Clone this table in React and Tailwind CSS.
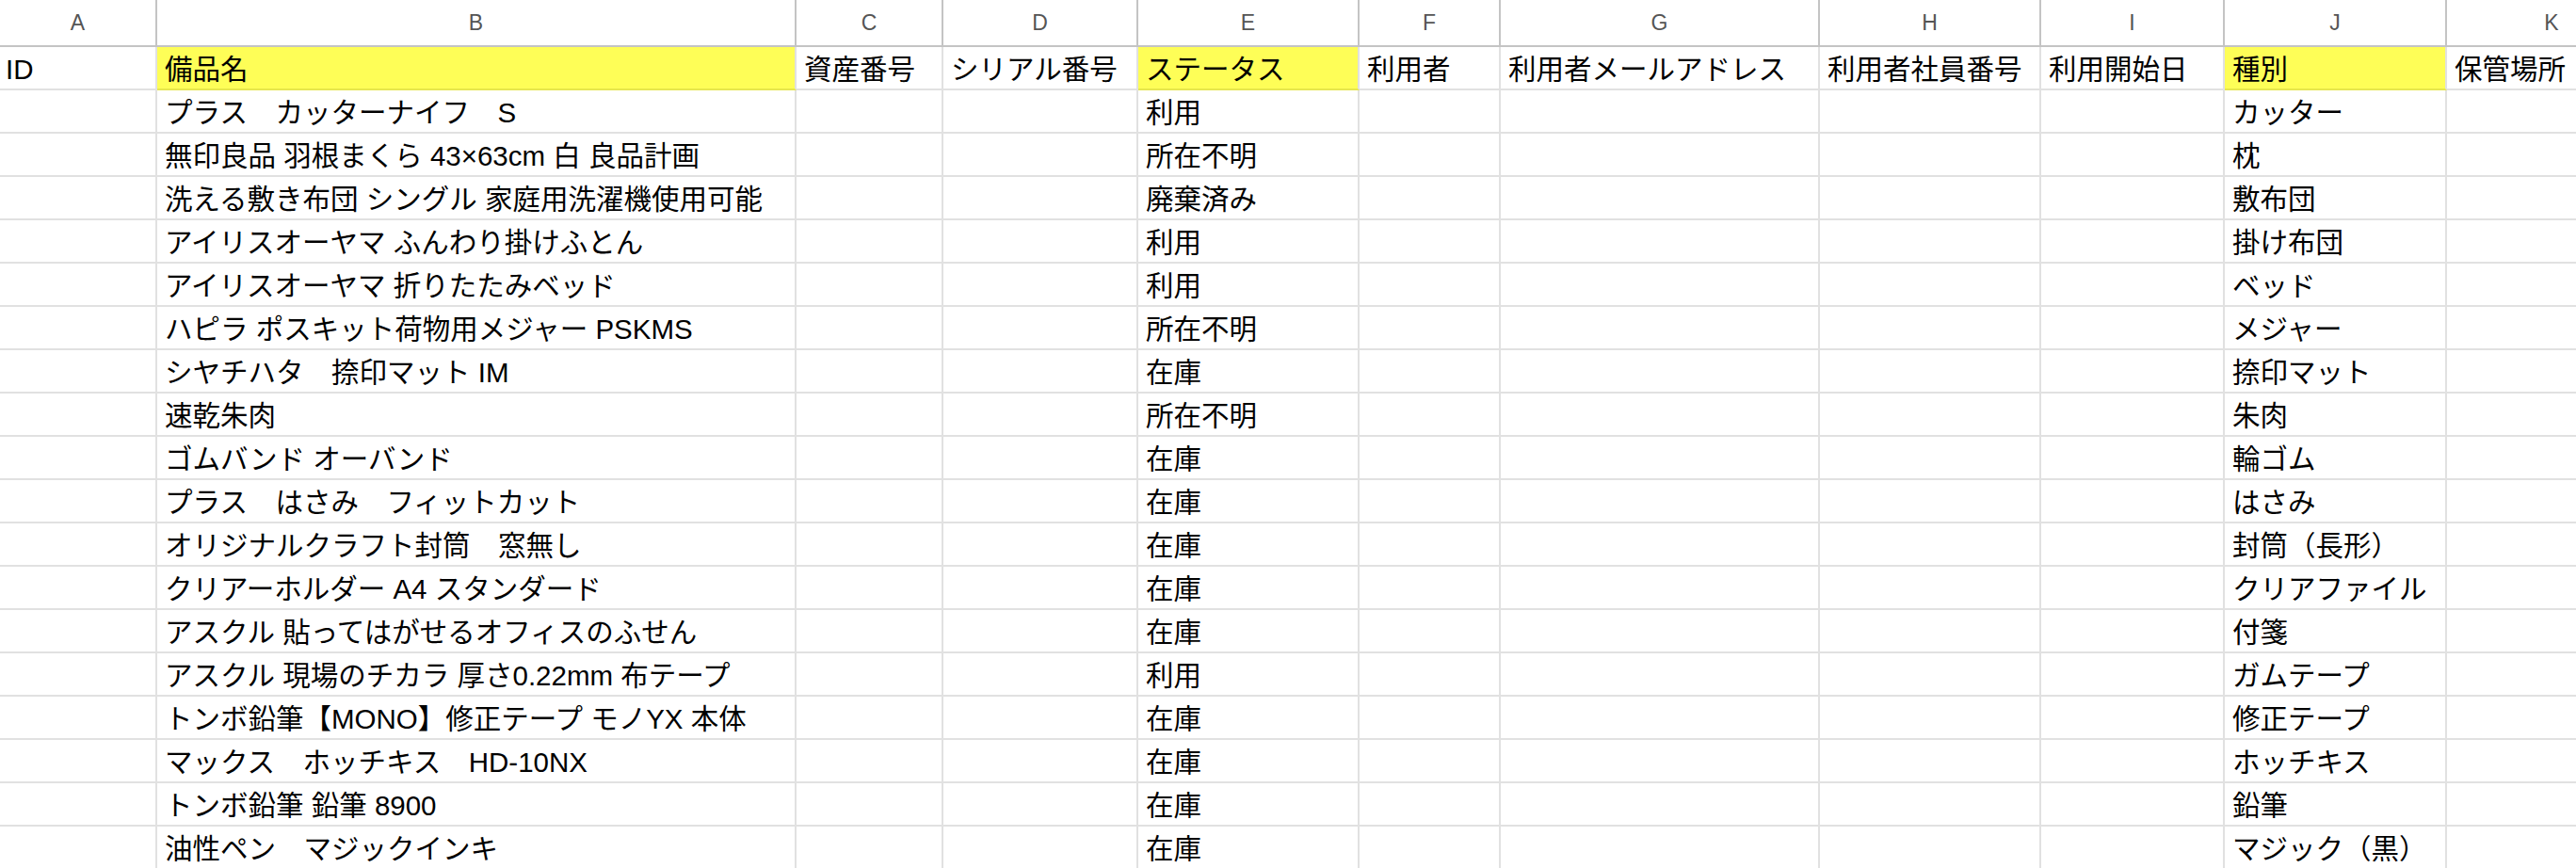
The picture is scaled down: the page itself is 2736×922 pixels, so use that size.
const cols = ["A", "B", "C", "D", "E", "F", "G", "H", "I", "J", "K"];

const header = [
  "ID",
  "備品名",
  "資産番号",
  "シリアル番号",
  "ステータス",
  "利用者",
  "利用者メールアドレス",
  "利用者社員番号",
  "利用開始日",
  "種別",
  "保管場所",
];

const yellowCols = [1, 4, 9];

const rows = [
  ["プラス　カッターナイフ　S", "利用", "カッター"],
  ["無印良品 羽根まくら 43×63cm 白 良品計画", "所在不明", "枕"],
  ["洗える敷き布団 シングル 家庭用洗濯機使用可能", "廃棄済み", "敷布団"],
  ["アイリスオーヤマ ふんわり掛けふとん", "利用", "掛け布団"],
  ["アイリスオーヤマ 折りたたみベッド", "利用", "ベッド"],
  ["ハピラ ポスキット荷物用メジャー PSKMS", "所在不明", "メジャー"],
  ["シヤチハタ　捺印マット IM", "在庫", "捺印マット"],
  ["速乾朱肉", "所在不明", "朱肉"],
  ["ゴムバンド オーバンド", "在庫", "輪ゴム"],
  ["プラス　はさみ　フィットカット", "在庫", "はさみ"],
  ["オリジナルクラフト封筒　窓無し", "在庫", "封筒（長形）"],
  ["クリアーホルダー A4 スタンダード", "在庫", "クリアファイル"],
  ["アスクル 貼ってはがせるオフィスのふせん", "在庫", "付箋"],
  ["アスクル 現場のチカラ 厚さ0.22mm 布テープ", "利用", "ガムテープ"],
  ["トンボ鉛筆【MONO】修正テープ モノYX 本体", "在庫", "修正テープ"],
  ["マックス　ホッチキス　HD-10NX", "在庫", "ホッチキス"],
  ["トンボ鉛筆 鉛筆 8900", "在庫", "鉛筆"],
  ["油性ペン　マジックインキ", "在庫", "マジック（黒）"],
];

function toCells(r) {
  const c = Array(11).fill("");
  c[1] = r[0];
  c[4] = r[1];
  c[9] = r[2];
  return c;
}

function Cell({ children, col, yellow }) {
  return (
    <div
      className={
        "flex items-center overflow-hidden whitespace-nowrap border-r-2 border-b-2 border-r-[#e1e1e1] pt-[4px] leading-[36px] " +
        (col === 0 ? "pl-[6px] " : "pl-[8px] ") +
        (yellow ? "bg-[#fefe57] border-b-[#e6e64e]" : "bg-white border-b-[#e1e1e1]")
      }
    >
      {children}
    </div>
  );
}

export default function App() {
  return (
    <div className="h-[922px] w-[2736px] overflow-hidden bg-white font-['Liberation_Sans','Noto_Sans_CJK_JP',sans-serif] text-[29.5px] text-black">
      <div className="grid w-max grid-cols-[167px_679px_156px_207px_235px_150px_339px_235px_195px_236px_224px] grid-rows-[50px_repeat(19,46px)]">
        {cols.map((c) => (
          <div
            key={c}
            className="flex items-center justify-center border-r-2 border-b-2 border-[#c4c4c4] bg-white text-[23px] text-[#555555]"
          >
            {c}
          </div>
        ))}
        {header.map((h, i) => (
          <Cell key={"h" + i} col={i} yellow={yellowCols.includes(i)}>
            {h}
          </Cell>
        ))}
        {rows.map((r, ri) =>
          toCells(r).map((v, ci) => (
            <Cell key={ri + "-" + ci} col={ci}>
              {v}
            </Cell>
          ))
        )}
      </div>
    </div>
  );
}
